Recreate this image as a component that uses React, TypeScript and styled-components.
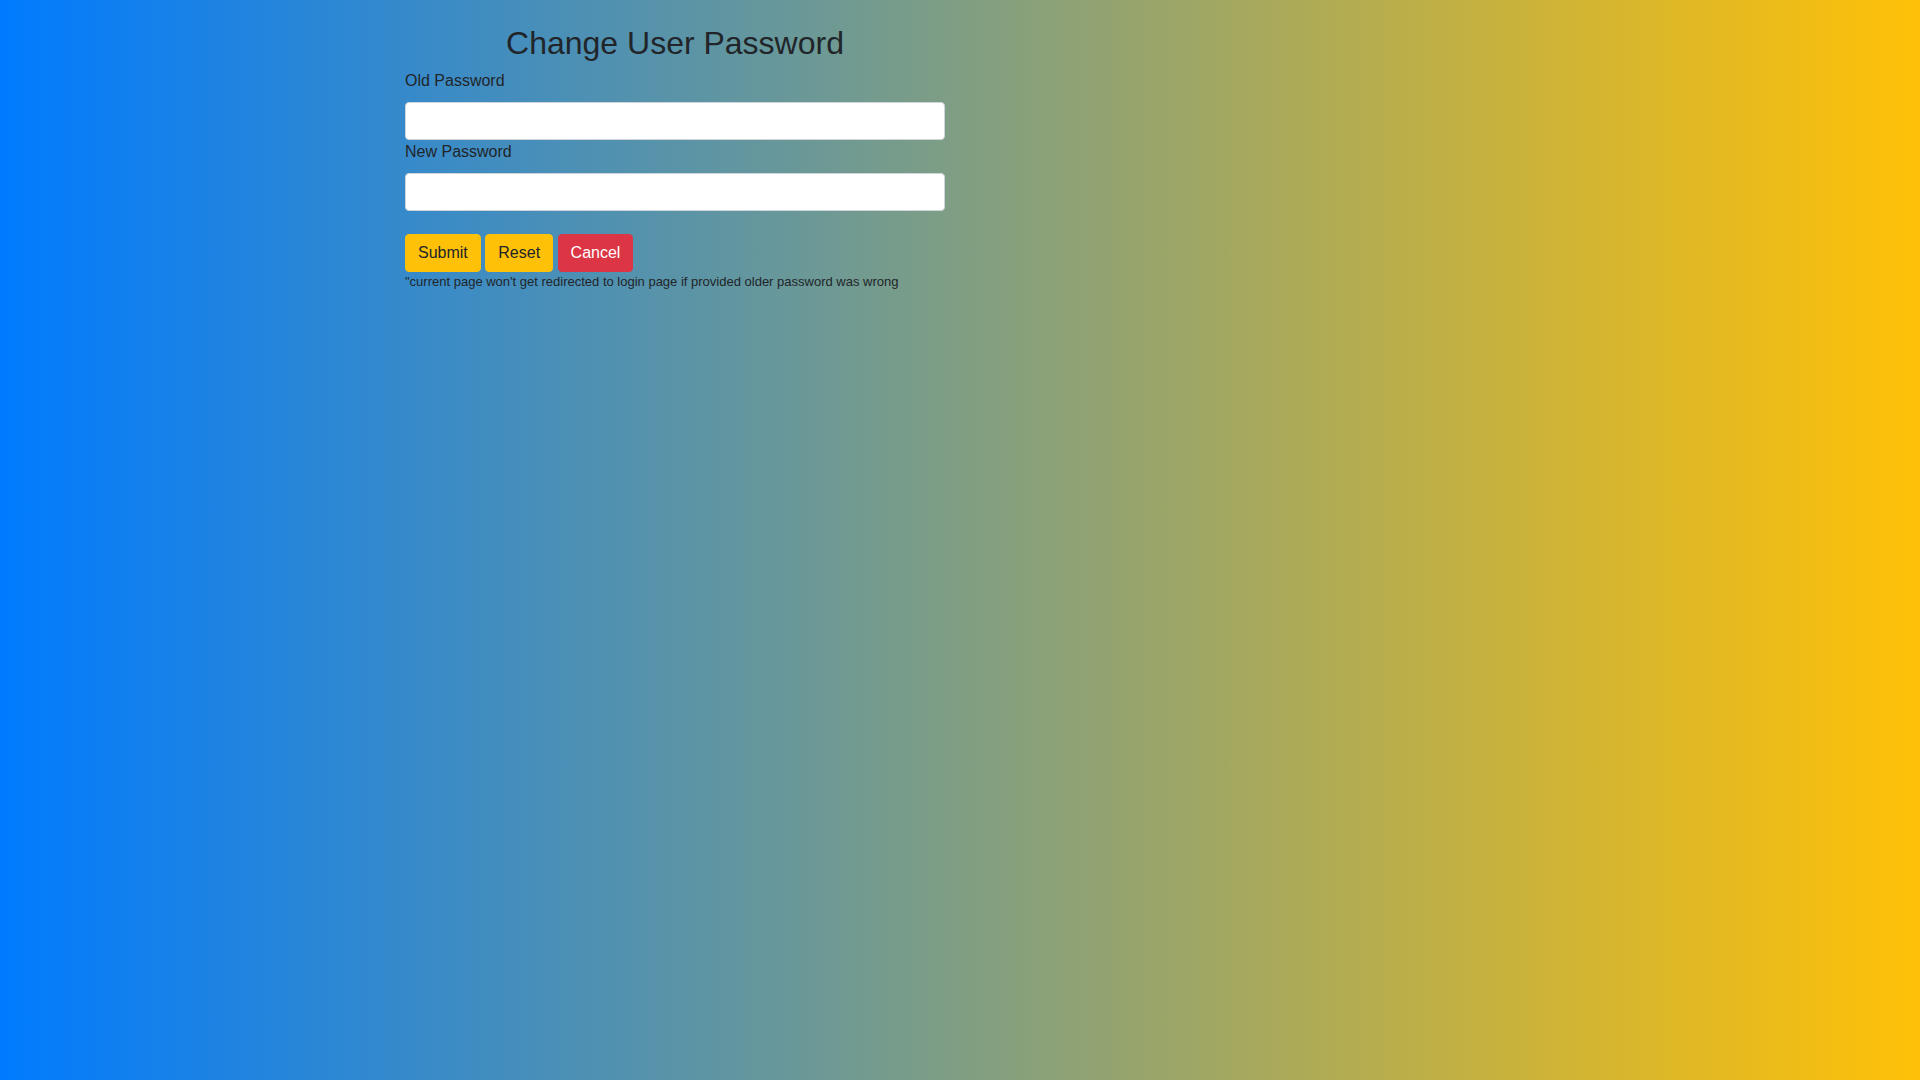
import React from "react";
import styled, { createGlobalStyle } from "styled-components";

const GlobalStyle = createGlobalStyle`
  html, body {
    margin: 0;
    padding: 0;
  }
  body {
    font-family: "Liberation Sans", Arial, Helvetica, sans-serif;
    font-size: 16px;
    line-height: 1.5;
    color: #212529;
  }
  * { box-sizing: border-box; }
`;

const Page = styled.div`
  min-height: 100vh;
  background: linear-gradient(to right, #007bff, #ffc107);
`;

const Container = styled.div`
  width: 1140px;
  margin: 0 auto;
  padding: 24px 15px 0;
`;

const Form = styled.form`
  width: 540px;
  display: flex;
  flex-direction: column;
`;

const Title = styled.h2`
  margin: 0 0 7px;
  font-size: 32px;
  font-weight: 400;
  line-height: 1.2;
  text-align: center;
  color: #212529;
`;

const Label = styled.label`
  display: block;
  font-size: 16px;
  line-height: 24px;
  margin-bottom: 9px;
`;

const Input = styled.input`
  display: block;
  width: 100%;
  height: 38px;
  padding: 6px 12px;
  font-family: inherit;
  font-size: 16px;
  color: #495057;
  background: #fff;
  border: 1px solid #ced4da;
  border-radius: 4px;
  outline: none;
`;

const Actions = styled.div`
  display: flex;
  gap: 4.5px;
  margin-top: 23px;
`;

const Button = styled.button<{ $variant: "warning" | "danger" }>`
  height: 38px;
  padding: 6px 12px;
  font-family: inherit;
  font-size: 16px;
  line-height: 24px;
  border-radius: 4px;
  cursor: pointer;
  border: 1px solid ${(p) => (p.$variant === "danger" ? "#dc3545" : "#ffc107")};
  background: ${(p) => (p.$variant === "danger" ? "#dc3545" : "#ffc107")};
  color: ${(p) => (p.$variant === "danger" ? "#fff" : "#212529")};
`;

const Note = styled.small`
  display: block;
  font-size: 13px;
  line-height: 19.2px;
  color: #212529;
`;

export default function App() {
  return (
    <>
      <GlobalStyle />
      <Page>
        <Container>
          <Form onSubmit={(e) => e.preventDefault()}>
            <Title>Change User Password</Title>
            <Label htmlFor="old">Old Password</Label>
            <Input id="old" type="password" />
            <Label htmlFor="new">New Password</Label>
            <Input id="new" type="password" />
            <Actions>
              <Button $variant="warning" type="submit">Submit</Button>
              <Button $variant="warning" type="reset">Reset</Button>
              <Button $variant="danger" type="button">Cancel</Button>
            </Actions>
            <Note>"current page won't get redirected to login page if provided older password was wrong</Note>
          </Form>
        </Container>
      </Page>
    </>
  );
}
